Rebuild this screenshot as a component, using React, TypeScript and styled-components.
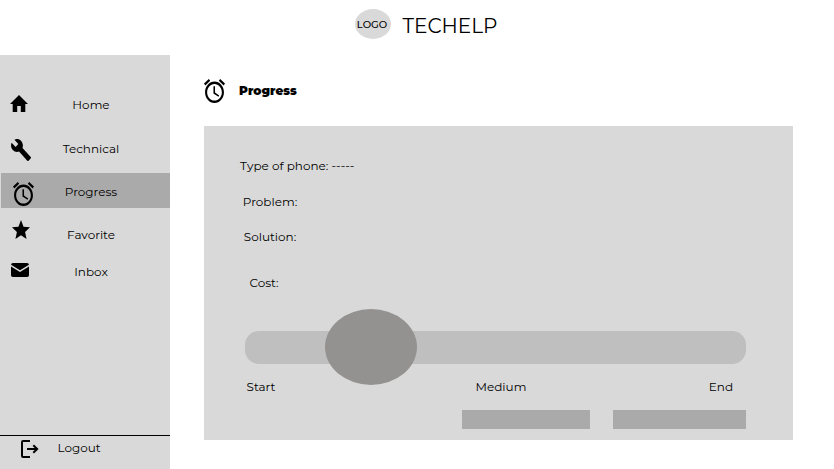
import React from "react";
import styled, { createGlobalStyle } from "styled-components";

const GlobalStyle = createGlobalStyle`
  * { box-sizing: border-box; }
  body {
    margin: 0;
    background: #fff;
    color: #000;
    font-family: Montserrat, Inter, sans-serif;
    font-size: 12px;
    line-height: 16px;
  }
`;

const Page = styled.div`
  display: flex;
  flex-direction: column;
  width: 834px;
  height: 469px;
  overflow: hidden;
`;

const Header = styled.header`
  display: flex;
  height: 55px;
  padding: 9px 0 0 355px;
`;

const Logo = styled.div`
  display: grid;
  place-items: center;
  width: 36px;
  height: 30px;
  padding: 1px 2px 0 0;
  border-radius: 50%;
  background: #d9d9d9;
  font-size: 10px;
  font-weight: 500;
`;

const Brand = styled.h1`
  margin: 4px 0 0 11.6px;
  font-size: 20px;
  font-weight: 400;
  line-height: 26px;
  white-space: nowrap;
`;

const Body = styled.div`
  display: flex;
  flex: 1;
`;

const Sidebar = styled.nav`
  display: flex;
  flex-direction: column;
  width: 170px;
  height: 414px;
  padding-top: 30px;
  background: #d9d9d9;
`;

const NavItem = styled.a<{ $height: number; $active?: boolean }>`
  display: flex;
  align-items: flex-start;
  height: ${(p) => p.$height}px;
  margin-left: ${(p) => (p.$active ? 1 : 0)}px;
  padding-left: ${(p) => (p.$active ? 0 : 1)}px;
  background: ${(p) => (p.$active ? "#aaa" : "transparent")};
`;

const IconSlot = styled.span<{ $left: number; $top: number }>`
  flex: 0 0 40px;
  padding: ${(p) => p.$top}px 0 0 ${(p) => p.$left}px;
  line-height: 0;
`;

const NavLabel = styled.span<{ $top: number }>`
  width: 100px;
  margin-top: ${(p) => p.$top}px;
  text-align: center;
`;

const Logout = styled.a`
  display: flex;
  height: 34px;
  margin-top: auto;
  border-top: 1px solid #000;
`;

const LogoutLabel = styled.span`
  margin: 4px 0 0 17.5px;
`;

const Main = styled.main`
  padding: 24px 0 0 34px;
`;

const TitleRow = styled.div`
  display: flex;
  height: 47px;
`;

const Title = styled.h2`
  margin: 4px 0 0 14px;
  font-size: 12px;
  font-weight: 900;
  line-height: 16px;
`;

const Card = styled.section`
  display: flex;
  flex-direction: column;
  width: 589px;
  height: 314px;
  padding: 32px 47px 11px 41px;
  background: #d9d9d9;
`;

const Fields = styled.div`
  flex: 0 0 151px;
  margin-left: -6px;
`;

const Field = styled.div<{ $indent: number; $height: number }>`
  height: ${(p) => p.$height}px;
  padding-left: ${(p) => p.$indent}px;
  white-space: nowrap;
`;

const Track = styled.div`
  display: flex;
  align-items: center;
  flex: none;
  height: 33px;
  margin-top: 22px;
  padding-left: 80px;
  border-radius: 14px;
  background: #bfbfbf;
`;

const Thumb = styled.div`
  flex: none;
  width: 92px;
  height: 76px;
  margin-bottom: 1px;
  border-radius: 50%;
  background: #939291;
`;

const Scale = styled.div`
  display: flex;
  height: 31px;
  margin-top: 15px;
  padding-left: 1.5px;
`;

const Tick = styled.span<{ $width: number }>`
  width: ${(p) => p.$width}px;
`;

const Actions = styled.div`
  display: grid;
  grid-template-columns: 128px 133px;
  justify-content: end;
  gap: 23px;
  height: 19px;
`;

const Action = styled.button`
  border: 0;
  padding: 0;
  background: #aaa;
`;

const paths = {
  home: ["2 3 20 17", "M10 20v-6h4v6h5v-8h3L12 3 2 12h3v8z"],
  wrench: [
    "0.9 1 22.1 22",
    "M22.7 19l-9.1-9.1c.9-2.3.4-5-1.5-6.9-2-2-5-2.4-7.4-1.3L9 6 6 9 1.6 4.7C.4 7.1.9 10.1 2.9 12.1c1.9 1.9 4.6 2.4 6.9 1.5l9.1 9.1c.4.4 1 .4 1.4 0l2.3-2.3c.5-.4.5-1.1.1-1.4z",
  ],
  alarm: [
    "2 1.86 20 20.14",
    "M22 5.72l-4.6-3.86-1.29 1.53 4.6 3.86L22 5.72zM7.88 3.39L6.6 1.86 2 5.71l1.29 1.53 4.59-3.85zM12.5 8H11v6l4.75 2.85.75-1.23-4-2.37V8zM12 4c-4.97 0-9 4.03-9 9s4.02 9 9 9c4.97 0 9-4.03 9-9s-4.03-9-9-9zm0 16c-3.87 0-7-3.13-7-7s3.13-7 7-7 7 3.13 7 7-3.13 7-7 7z",
  ],
  star: [
    "2 2 20 19",
    "M12 17.27L18.18 21l-1.64-7.03L22 9.24l-7.19-.61L12 2 9.19 8.63 2 9.24l5.46 4.73L5.82 21z",
  ],
  mail: [
    "2 4 20 16",
    "M4 4H20Q21.6 4 22 6L12 12.4L2 6Q2.4 4 4 4zM2 8L12 14.4L22 8V18Q22 20 20 20H4Q2 20 2 18z",
  ],
  logout: [
    "0 0 18 18",
    "M9 0H2Q0 0 0 2V16Q0 18 2 18H9V16H2V2H9zM13 4.5L11.6 5.9L13.7 8H6V10H13.7L11.6 12.1L13 13.5L17.6 9z",
  ],
} as const;

function Icon({ name, w, h }: { name: keyof typeof paths; w: number; h: number }) {
  const [box, d] = paths[name];
  return (
    <svg width={w} height={h} viewBox={box} preserveAspectRatio="none" aria-hidden>
      <path d={d} />
    </svg>
  );
}

type NavEntry = {
  icon: keyof typeof paths;
  label: string;
  size: [number, number];
  offset: [number, number];
  top: number;
  height: number;
  active?: boolean;
};

const nav: NavEntry[] = [
  { icon: "home", label: "Home", size: [18, 17], offset: [9.4, 10], top: 12, height: 44 },
  { icon: "wrench", label: "Technical", size: [20, 22], offset: [10.4, 9.8], top: 12, height: 44 },
  { icon: "alarm", label: "Progress", size: [21, 24], offset: [12, 9], top: 11, height: 35, active: true },
  { icon: "star", label: "Favorite", size: [18, 19], offset: [11.4, 12], top: 19, height: 44 },
  { icon: "mail", label: "Inbox", size: [18, 14], offset: [9.5, 11], top: 12, height: 40 },
];

export default function App() {
  return (
    <Page>
      <GlobalStyle />
      <Header>
        <Logo>LOGO</Logo>
        <Brand>TECHELP</Brand>
      </Header>
      <Body>
        <Sidebar>
          {nav.map((n) => (
            <NavItem key={n.label} $height={n.height} $active={n.active}>
              <IconSlot $left={n.offset[0]} $top={n.offset[1]}>
                <Icon name={n.icon} w={n.size[0]} h={n.size[1]} />
              </IconSlot>
              <NavLabel $top={n.top}>{n.label}</NavLabel>
            </NavItem>
          ))}
          <Logout>
            <IconSlot $left={20.7} $top={4}>
              <Icon name="logout" w={18} h={18} />
            </IconSlot>
            <LogoutLabel>Logout</LogoutLabel>
          </Logout>
        </Sidebar>
        <Main>
          <TitleRow>
            <Icon name="alarm" w={21} h={24} />
            <Title>Progress</Title>
          </TitleRow>
          <Card>
            <Fields>
              <Field $indent={1} $height={36}>Type of phone: -----</Field>
              <Field $indent={3.8} $height={35}>Problem:</Field>
              <Field $indent={4.8} $height={46}>Solution:</Field>
              <Field $indent={10.5} $height={16}>Cost:</Field>
            </Fields>
            <Track>
              <Thumb />
            </Track>
            <Scale>
              <Tick $width={229}>Start</Tick>
              <Tick $width={233.3}>Medium</Tick>
              <Tick $width={30}>End</Tick>
            </Scale>
            <Actions>
              <Action aria-label="Previous" />
              <Action aria-label="Next" />
            </Actions>
          </Card>
        </Main>
      </Body>
    </Page>
  );
}
